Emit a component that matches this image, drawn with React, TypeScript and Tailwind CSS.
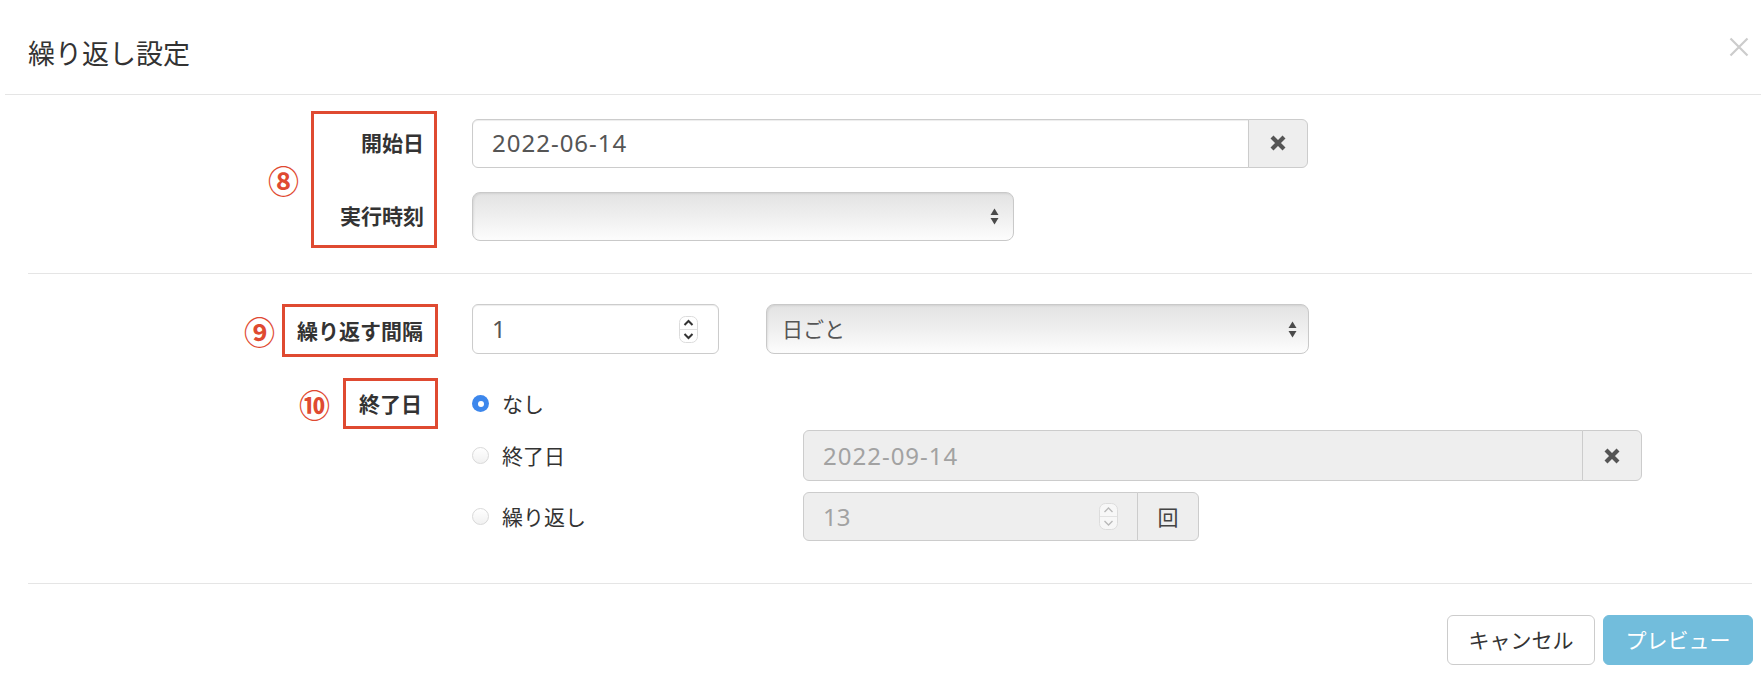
import React from "react";

// Repeat-settings modal (繰り返し設定) with annotation boxes.

const RED = "border-[#df4a31]";

function ClearIcon() {
  return (
    <svg width="18" height="18" viewBox="0 0 18 18">
      <path d="M3 3 L15 15 M15 3 L3 15" stroke="#555" strokeWidth="4.2" strokeLinecap="butt" />
    </svg>
  );
}

function CloseIcon() {
  return (
    <svg width="20" height="20" viewBox="0 0 20 20">
      <path d="M1.5 1.5 L18.5 18.5 M18.5 1.5 L1.5 18.5" stroke="#cccccc" strokeWidth="2.2" />
    </svg>
  );
}

function SelectArrows() {
  return (
    <svg width="9" height="17" viewBox="0 0 9 17">
      <path d="M0.5 7 L4.5 0.5 L8.5 7 Z" fill="#4a4a4a" />
      <path d="M0.5 10 L8.5 10 L4.5 16.5 Z" fill="#4a4a4a" />
    </svg>
  );
}

function Stepper({ disabled }: { disabled?: boolean }) {
  const c = disabled ? "#b8b8b8" : "#333";
  return (
    <svg width="19" height="27" viewBox="0 0 19 27">
      <rect x="0.5" y="0.5" width="18" height="26" rx="6" fill={disabled ? "#f7f7f7" : "#fff"} stroke="#dcdcdc" />
      <line x1="1" y1="13.5" x2="18" y2="13.5" stroke="#e2e2e2" />
      <path d="M5.5 9 L9.5 5 L13.5 9" fill="none" stroke={c} strokeWidth={disabled ? 1.3 : 2} />
      <path d="M5.5 18 L9.5 22 L13.5 18" fill="none" stroke={c} strokeWidth={disabled ? 1.3 : 2} />
    </svg>
  );
}

function Radio({ checked }: { checked?: boolean }) {
  if (checked) {
    return (
      <span className="w-[17px] h-[17px] rounded-full bg-[#3d87ec] flex items-center justify-center shrink-0">
        <span className="w-[6px] h-[6px] rounded-full bg-white" />
      </span>
    );
  }
  return (
    <span className="w-[17px] h-[17px] rounded-full border border-[#d9d9d9] bg-linear-to-b from-white to-[#f1f1f1] shrink-0" />
  );
}

function Mark({ children, className }: { children: React.ReactNode; className?: string }) {
  return (
    <span className={"text-[#df4a31] text-[31px] font-bold leading-none font-['Noto_Sans_CJK_JP',sans-serif] " + (className ?? "")}>
      {children}
    </span>
  );
}

const selectCls =
  "flex items-center justify-between rounded-[8px] border border-[#c9c9c9] bg-linear-to-b from-[#e3e3e3] via-[#efefef] to-[#fdfdfd] shadow-[inset_1px_1px_2px_rgba(0,0,0,0.08)]";

export default function App() {
  return (
    <div className="w-[1761px] h-[686px] bg-white text-[#333] font-['Noto_Sans_CJK_JP',sans-serif]">
      {/* header */}
      <div className="ml-[5px] h-[95px] border-b border-[#e5e5e5] flex items-center justify-between pl-[23px] pr-[12px] pt-[10px]">
        <div className="text-[27px] leading-none">繰り返し設定</div>
        <div className="-mt-[10px]">
          <CloseIcon />
        </div>
      </div>

      {/* start date / time */}
      <div className="ml-[28px] mr-[9px] border-b border-[#e5e5e5] pt-[16px] pb-[25px] flex items-center">
        <div className="w-[444px] shrink-0 flex items-center justify-end pr-[35px]">
          <Mark className="mr-[12px]">⑧</Mark>
          <div className={"w-[126px] h-[137px] border-[3px] " + RED + " pr-[10px] flex flex-col justify-center gap-[24px]"}>
            <div className="h-[49px] flex items-center justify-end text-[21px] font-bold">開始日</div>
            <div className="h-[49px] flex items-center justify-end text-[21px] font-bold">実行時刻</div>
          </div>
        </div>
        <div className="flex flex-col gap-[24px]">
          <div className="flex h-[49px]">
            <div className="w-[777px] border border-[#ccc] rounded-l-[6px] shadow-[inset_0_1px_1px_rgba(0,0,0,0.075)] flex items-center pl-[19px] text-[24px] tracking-[1px] text-[#555] font-['Noto_Sans','Noto_Sans_CJK_JP',sans-serif]">
              2022-06-14
            </div>
            <div className="w-[60px] -ml-px border border-[#ccc] rounded-r-[6px] bg-[#eee] flex items-center justify-center">
              <ClearIcon />
            </div>
          </div>
          <div className={selectCls + " w-[542px] h-[49px] pr-[14px]"}>
            <span />
            <SelectArrows />
          </div>
        </div>
      </div>

      {/* interval / end */}
      <div className="ml-[28px] mr-[9px] border-b border-[#e5e5e5] pt-[30px] pb-[42px]">
        <div className="flex items-start">
          <div className="w-[444px] shrink-0 flex items-center justify-end pr-[34px]">
            <Mark className="mr-[7px]">⑨</Mark>
            <div className={"w-[156px] h-[53px] border-[3px] " + RED + " flex items-center justify-center text-[21px] font-bold"}>
              繰り返す間隔
            </div>
          </div>
          <div className="w-[247px] h-[50px] border border-[#ccc] rounded-[6px] shadow-[inset_0_1px_1px_rgba(0,0,0,0.075)] flex items-center justify-between pl-[19px] pr-[20px]">
            <span className="text-[24px] text-[#555] font-['Noto_Sans',sans-serif]">1</span>
            <Stepper />
          </div>
          <div className={selectCls + " ml-[47px] w-[543px] h-[50px] pl-[15px] pr-[11px]"}>
            <span className="text-[21px] text-[#555]">日ごと</span>
            <SelectArrows />
          </div>
        </div>

        <div className="flex items-start mt-[21px]">
          <div className="w-[444px] shrink-0 flex items-center justify-end pr-[34px]">
            <Mark className="mr-[13px]">⑩</Mark>
            <div className={"w-[95px] h-[51px] border-[3px] " + RED + " flex items-center justify-center text-[21px] font-bold"}>
              終了日
            </div>
          </div>
          <div className="flex flex-col">
            <div className="h-[51px] flex items-center">
              <Radio checked />
              <span className="ml-[13px] text-[21px]">なし</span>
            </div>
            <div className="mt-[1px] h-[51px] flex items-center">
              <div className="w-[331px] flex items-center">
                <Radio />
                <span className="ml-[13px] text-[21px]">終了日</span>
              </div>
              <div className="w-[780px] h-full border border-[#ccc] rounded-l-[6px] bg-[#eee] flex items-center pl-[19px] text-[24px] tracking-[1px] text-[#a2a2a2] font-['Noto_Sans','Noto_Sans_CJK_JP',sans-serif]">
                2022-09-14
              </div>
              <div className="w-[60px] h-full -ml-px border border-[#ccc] rounded-r-[6px] bg-[#eee] flex items-center justify-center">
                <ClearIcon />
              </div>
            </div>
            <div className="mt-[11px] h-[49px] flex items-center">
              <div className="w-[331px] flex items-center">
                <Radio />
                <span className="ml-[13px] text-[21px]">繰り返し</span>
              </div>
              <div className="w-[335px] h-full border border-[#ccc] rounded-l-[6px] bg-[#eee] flex items-center justify-between pl-[19px] pr-[19px]">
                <span className="text-[24px] text-[#a2a2a2] font-['Noto_Sans',sans-serif]">13</span>
                <Stepper disabled />
              </div>
              <div className="w-[62px] h-full -ml-px border border-[#ccc] rounded-r-[6px] bg-[#eee] flex items-center justify-center text-[21px] text-[#444]">
                回
              </div>
            </div>
          </div>
        </div>
      </div>

      {/* footer */}
      <div className="pt-[31px] mr-[8px] flex justify-end gap-[8px]">
        <button className="w-[148px] h-[50px] border border-[#ccc] rounded-[6px] bg-white text-[21px] text-[#333]">
          キャンセル
        </button>
        <button className="w-[150px] h-[50px] border border-[#72bddc] rounded-[6px] bg-[#72bddc] text-[21px] text-white">
          プレビュー
        </button>
      </div>
    </div>
  );
}
